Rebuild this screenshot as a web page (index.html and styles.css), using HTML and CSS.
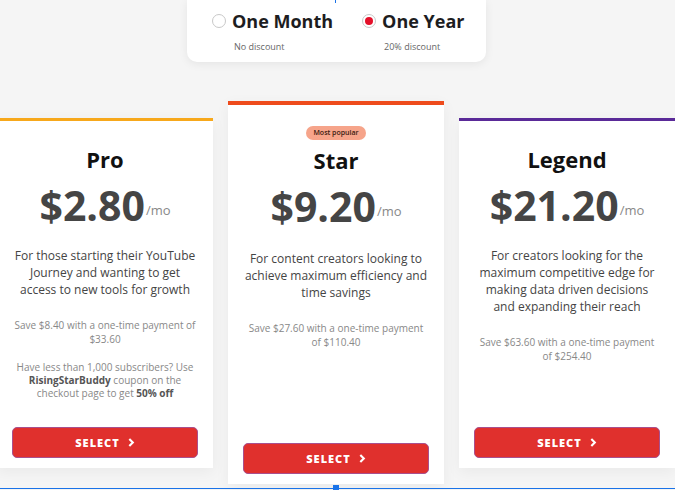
FILE: index.html
```html
<!DOCTYPE html>
<html>
<head>
<meta charset="utf-8">
<link rel="stylesheet" href="styles.css">
</head>
<body>
<div class="page">
  <div class="toggle-wrap">
    <div class="toggle">
      <div class="opt">
        <div class="opt-head"><span class="radio"></span><span class="opt-label">One Month</span></div>
        <div class="opt-sub">No discount</div>
      </div>
      <div class="opt">
        <div class="opt-head"><span class="radio checked"></span><span class="opt-label">One Year</span></div>
        <div class="opt-sub">20% discount</div>
      </div>
    </div>
  </div>

  <div class="cards">
    <div class="card card-pro">
      <div class="card-top">
        <h2 class="plan">Pro</h2>
        <div class="price"><span class="amount">$2.80</span><span class="per">/mo</span></div>
        <p class="desc">For those starting their YouTube<br>Journey and wanting to get<br>access to new tools for growth</p>
        <p class="save">Save $8.40 with a one-time payment of<br>$33.60</p>
        <p class="save note">Have less than 1,000 subscribers? Use<br><b>RisingStarBuddy</b> coupon on the<br>checkout page to get <b>50% off</b></p>
      </div>
      <button class="select">SELECT <svg class="chev" viewBox="0 0 8 10" width="7" height="9"><path d="M1.5 1 L5.5 5 L1.5 9" fill="none" stroke="#fff" stroke-width="2.4"/></svg></button>
    </div>

    <div class="card card-star">
      <div class="card-top">
        <span class="badge">Most popular</span>
        <h2 class="plan">Star</h2>
        <div class="price"><span class="amount">$9.20</span><span class="per">/mo</span></div>
        <p class="desc">For content creators looking to<br>achieve maximum efficiency and<br>time savings</p>
        <p class="save">Save $27.60 with a one-time payment<br>of $110.40</p>
      </div>
      <button class="select">SELECT <svg class="chev" viewBox="0 0 8 10" width="7" height="9"><path d="M1.5 1 L5.5 5 L1.5 9" fill="none" stroke="#fff" stroke-width="2.4"/></svg></button>
    </div>

    <div class="card card-legend">
      <div class="card-top">
        <h2 class="plan">Legend</h2>
        <div class="price"><span class="amount">$21.20</span><span class="per">/mo</span></div>
        <p class="desc">For creators looking for the<br>maximum competitive edge for<br>making data driven decisions<br>and expanding their reach</p>
        <p class="save">Save $63.60 with a one-time payment<br>of $254.40</p>
      </div>
      <button class="select">SELECT <svg class="chev" viewBox="0 0 8 10" width="7" height="9"><path d="M1.5 1 L5.5 5 L1.5 9" fill="none" stroke="#fff" stroke-width="2.4"/></svg></button>
    </div>
  </div>

  <div class="sel-line"><span class="sel-handle"></span></div>
  <span class="sel-top"></span>
</div>
</body>
</html>
```

FILE: styles.css
```css
* { box-sizing: border-box; }
html, body {
  margin: 0;
  padding: 0;
  width: 675px;
  height: 490px;
  overflow: hidden;
  background: #f5f5f5;
  font-family: "Open Sans", "Liberation Sans", sans-serif;
  color: #222;
}
.page {
  position: relative;
  width: 675px;
  height: 490px;
  overflow: hidden;
}
.toggle-wrap {
  display: flex;
  justify-content: flex-start;
  padding-left: 187px;
}
.toggle {
  width: 299px;
  height: 62px;
  background: #fff;
  border-radius: 0 0 10px 10px;
  box-shadow: 0 2px 10px rgba(0,0,0,0.07);
  display: flex;
  padding: 9px 0 0 25px;
  gap: 29px;
}
.opt-head {
  display: flex;
  align-items: center;
  gap: 6px;
}
.radio {
  width: 14px;
  height: 14px;
  border-radius: 50%;
  border: 1px solid #c8c8c8;
  background: #fff;
  display: inline-block;
  position: relative;
}
.radio.checked::after {
  content: "";
  position: absolute;
  left: 2px;
  top: 2px;
  width: 8px;
  height: 8px;
  border-radius: 50%;
  background: #e4102a;
}
.opt-label {
  font-size: 18px;
  font-weight: 700;
  color: #1d1d1f;
  line-height: 24px;
}
.opt-sub {
  font-size: 9px;
  color: #666;
  margin-top: 7px;
  padding-left: 22px;
}

.cards {
  margin-top: 39px;
  margin-left: -3px;
  width: 678px;
  display: flex;
  align-items: center;
  gap: 15px;
}
.card {
  width: 216px;
  flex: none;
  background: #fff;
  height: 350px;
  display: flex;
  flex-direction: column;
  justify-content: space-between;
  padding: 0 12px 10px;
  box-shadow: 0 4px 14px rgba(0,0,0,0.05);
  text-align: center;
}
.card .select { align-self: center; }
.card-pro { border-top: 3px solid #f7a81b; }
.card-star { border-top: 4px solid #ee4b1c; height: 383px; }
.card-legend { border-top: 3px solid #5a2a98; }

.card-top {
  display: flex;
  flex-direction: column;
  align-items: center;
}
.badge {
  margin-top: 21px;
  background: #f6a48a;
  color: #3a1a10;
  font-size: 7px;
  font-weight: 600;
  border-radius: 8px;
  padding: 2px 7px;
  line-height: 10px;
}
.plan {
  margin: 24px 0 0;
  font-size: 22px;
  font-weight: 700;
  color: #111;
  line-height: 28px;
}
.card-star .plan { margin-top: 6px; }
.price {
  display: flex;
  align-items: flex-start;
  margin-top: 10px;
}
.amount {
  font-size: 41px;
  font-weight: 700;
  color: #454545;
  line-height: 44px;
}
.per {
  font-size: 13px;
  color: #888;
  margin-top: 18px;
  margin-left: 1px;
}
.desc {
  margin: 20px 0 0;
  font-size: 12px;
  line-height: 17px;
  color: #444;
}
.card-star .desc { margin-top: 22px; }
.save {
  margin: 20px 0 0;
  font-size: 10px;
  line-height: 14px;
  color: #888;
}
.save b { color: #555; font-weight: 700; }
.save.note { margin-top: 15px; line-height: 13px; }

.select {
  width: 186px;
  height: 31px;
  background: #e0302d;
  border: 1px solid #a8508e;
  border-radius: 5px;
  color: #fff;
  font-family: "Open Sans", "Liberation Sans", sans-serif;
  font-weight: 800;
  font-size: 11px;
  letter-spacing: 1px;
  display: flex;
  align-items: center;
  justify-content: center;
  gap: 8px;
  padding: 0;
}

.sel-line {
  position: absolute;
  left: 0;
  top: 488px;
  width: 675px;
  height: 1px;
  background: #1a73e8;
}
.sel-handle {
  position: absolute;
  left: 333px;
  top: -3px;
  width: 6px;
  height: 6px;
  background: #1a73e8;
}
.sel-top {
  position: absolute;
  left: 335px;
  top: 0;
  width: 1px;
  height: 3px;
  background: #1a73e8;
}
```
